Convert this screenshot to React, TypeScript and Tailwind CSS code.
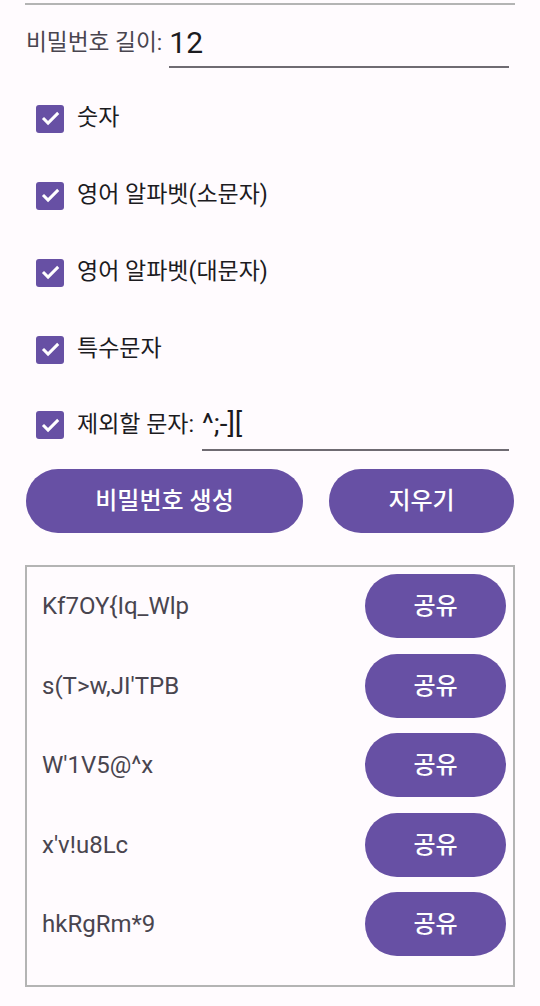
import React from 'react';

const options = ['숫자', '영어 알파벳(소문자)', '영어 알파벳(대문자)', '특수문자'];

const passwords = ['Kf7OY{Iq_Wlp', "s(T>w,JI'TPB", "W'1V5@^x", "x'v!u8Lc", 'hkRgRm*9'];

function CheckBox() {
  return (
    <div className="w-[28px] h-[28px] rounded-[3px] bg-[#6750a4] flex items-center justify-center shrink-0">
      <svg width="21" height="21" viewBox="0 0 24 24" fill="none">
        <path d="M4.6 12.6l4.6 4.6L19.6 6.8" stroke="white" strokeWidth="3.4" strokeLinecap="square" />
      </svg>
    </div>
  );
}

export default function App() {
  return (
    <div
      className="w-[540px] h-[1006px] bg-[#fffbfe] overflow-hidden"
      style={{ fontFamily: "Roboto, 'Noto Sans CJK KR', sans-serif" }}
    >
      <div className="h-[3px]" />
      <div className="mx-[25px] h-[2px] bg-[#b4b4b4]" />

      <div className="flex items-center h-[50px] mt-[13px] pl-[26px] pr-[31px]">
        <span className="text-[22.7px] text-[#49454f] mr-[7px]">비밀번호 길이:</span>
        <div className="flex-1 self-stretch flex items-center border-b-2 border-[#6f6b72] pt-[2px]">
          <span className="text-[30px] text-[#1c1b1f] leading-none">12</span>
        </div>
      </div>

      <div className="mt-[12px]">
        {options.map((label) => (
          <div key={label} className="flex items-center h-[77px] pl-[36px] gap-[13px]">
            <CheckBox />
            <span className="text-[23px] text-[#1c1b1f]">{label}</span>
          </div>
        ))}
      </div>

      <div className="flex items-center h-[52px] mt-[11px] pl-[36px] pr-[31px]">
        <CheckBox />
        <span className="text-[23px] text-[#1c1b1f] ml-[13px] mr-[8px]">제외할 문자:</span>
        <div className="flex-1 self-stretch flex items-center border-b-2 border-[#6f6b72]">
          <span className="text-[28px] text-[#1c1b1f] leading-none">^;-][</span>
        </div>
      </div>

      <div className="flex gap-[26px] px-[26px] mt-[18px]">
        <button className="w-[277px] h-[64px] rounded-full bg-[#6750a4] text-white text-[24px] font-medium">
          비밀번호 생성
        </button>
        <button className="w-[185px] h-[64px] rounded-full bg-[#6750a4] text-white text-[24px] font-medium">
          지우기
        </button>
      </div>

      <div className="mx-[25px] mt-[32px] h-[422px] border-2 border-[#b4b4b4] pt-[7px] pr-[7px] pl-[15px] flex flex-col gap-[15.5px]">
        {passwords.map((pw) => (
          <div key={pw} className="flex items-center justify-between h-[64px]">
            <span className="text-[24px] text-[#49454f]">{pw}</span>
            <button className="w-[141px] h-[64px] rounded-full bg-[#6750a4] text-white text-[24px] font-medium">
              공유
            </button>
          </div>
        ))}
      </div>
    </div>
  );
}
